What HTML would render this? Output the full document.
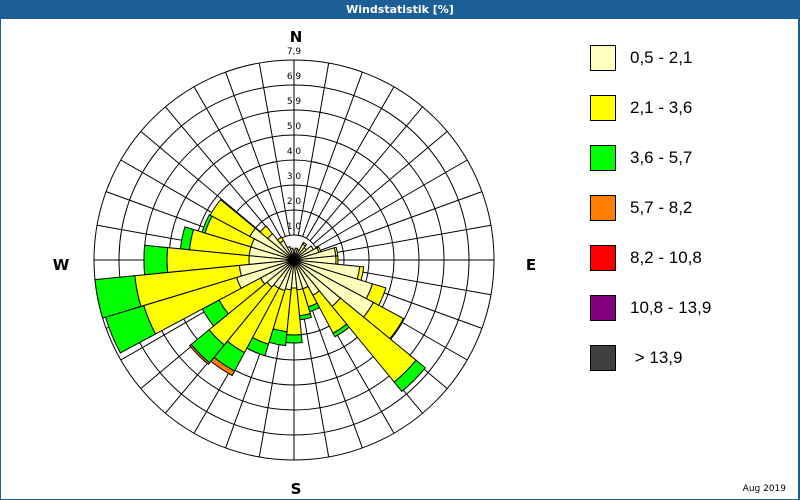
<!DOCTYPE html>
<html><head><meta charset="utf-8">
<style>
html,body{margin:0;padding:0;}
body{width:800px;height:500px;position:relative;background:#fff;overflow:hidden;font-family:"Liberation Sans","DejaVu Sans",sans-serif;}
#frame{position:absolute;left:0;top:0;border-left:1px solid #1c5f96;border-right:2px solid #1c5f96;border-bottom:1px solid #1c5f96;box-sizing:border-box;width:800px;height:500px;}
#title{position:absolute;left:0;top:0;width:800px;height:19px;background:#1c5f96;color:#fff;font-weight:bold;font-size:11px;line-height:19px;text-align:center;font-family:"DejaVu Sans","Liberation Sans",sans-serif;}
.leg{position:absolute;left:590px;width:24px;height:24px;border:1px solid #000;}
.lt{position:absolute;left:630px;font-size:17px;color:#000;font-family:"Liberation Sans",sans-serif;}
#date{position:absolute;right:14px;top:484px;font-size:9px;font-family:"DejaVu Sans",sans-serif;}
svg{position:absolute;left:0;top:0;}
</style></head><body>
<div id="frame"></div>
<div id="title">Windstatistik [%]</div>
<svg id="s" width="800" height="500" xmlns="http://www.w3.org/2000/svg">
<g id="grid" stroke="#000" stroke-width="1" fill="none"></g>
<g id="wedges" stroke="#000" stroke-width="1"></g>
<g font-family="DejaVu Sans, sans-serif" font-size="9" fill="#000" text-anchor="middle">
<text x="294" y="54">7,9</text><text x="294" y="79">6,9</text><text x="294" y="104">5,9</text>
<text x="294" y="129">5,0</text><text x="294" y="154">4,0</text><text x="294" y="179">3,0</text>
<text x="294" y="204">2,0</text><text x="294" y="229">1,0</text>
</g>
<g font-family="DejaVu Sans, sans-serif" font-size="15" font-weight="bold" fill="#000" text-anchor="middle">
<text x="296" y="42">N</text><text x="61" y="270">W</text><text x="531" y="270">E</text><text x="296" y="494">S</text>
</g>
</svg>
<div class="leg" style="top:45px;background:#ffffc0"></div><div class="lt" style="top:48px">0,5 - 2,1</div>
<div class="leg" style="top:95px;background:#ffff00"></div><div class="lt" style="top:98px">2,1 - 3,6</div>
<div class="leg" style="top:145px;background:#00ff00"></div><div class="lt" style="top:148px">3,6 - 5,7</div>
<div class="leg" style="top:195px;background:#ff8000"></div><div class="lt" style="top:198px">5,7 - 8,2</div>
<div class="leg" style="top:245px;background:#ff0000"></div><div class="lt" style="top:248px">8,2 - 10,8</div>
<div class="leg" style="top:295px;background:#800080"></div><div class="lt" style="top:298px">10,8 - 13,9</div>
<div class="leg" style="top:345px;background:#404040"></div><div class="lt" style="top:348px">&nbsp;&gt; 13,9</div>
<div id="date">Aug 2019</div>
<script>
var cx=294,cy=260;
function P(r,d){var a=d*Math.PI/180;return [(cx+r*Math.sin(a)).toFixed(1),(cy-r*Math.cos(a)).toFixed(1)];}
var g=document.getElementById('grid'),h='';
for(var k=1;k<=8;k++){h+='<circle cx="'+cx+'" cy="'+cy+'" r="'+(25*k)+'"/>';}
for(var d=0;d<360;d+=10){var p=P(200,d),q=P(25,d);h+='<line x1="'+q[0]+'" y1="'+q[1]+'" x2="'+p[0]+'" y2="'+p[1]+'"/>';}
g.innerHTML=h;
var cols=['#ffffc0','#ffff00','#00ff00','#ff8000'];
var D={0:[10],1:[12],2:[11],3:[18,20],4:[16],5:[22],6:[26,28],7:[42,44],8:[42,44],9:[66,70],10:[82,96],11:[90,124],12:[60,158,170],
13:[40,83,87],14:[30,49,54],15:[30,56,60],16:[28,75,83],17:[30,72,86],18:[32,88,100],19:[32,105,126,131],20:[35,110,133,135],
21:[38,85,104],22:[60,157,197],23:[55,160,200],24:[45,127,150],25:[45,105,114],26:[45,93,96],27:[50,95],28:[34,44],29:[22,26],30:[14],31:[12]};
var w='';
for(var k in D){var b=k*11.25,a1=b-5.625,a2=b+5.625,arr=D[k],r0=0;
 for(var i=0;i<arr.length;i++){var r=arr[i];var A=P(r0,a1),B=P(r,a1),C=P(r,a2),E=P(r0,a2);
  w+='<path fill="'+cols[i]+'" d="M'+A+' L'+B+' A'+r+' '+r+' 0 0 1 '+C+' L'+E+(r0>0?' A'+r0+' '+r0+' 0 0 0 '+A:'')+' Z"/>';r0=r;}}
w+='<circle cx="'+cx+'" cy="'+cy+'" r="5" fill="#000"/>';
document.getElementById('wedges').innerHTML=w;
</script>
</body></html>
